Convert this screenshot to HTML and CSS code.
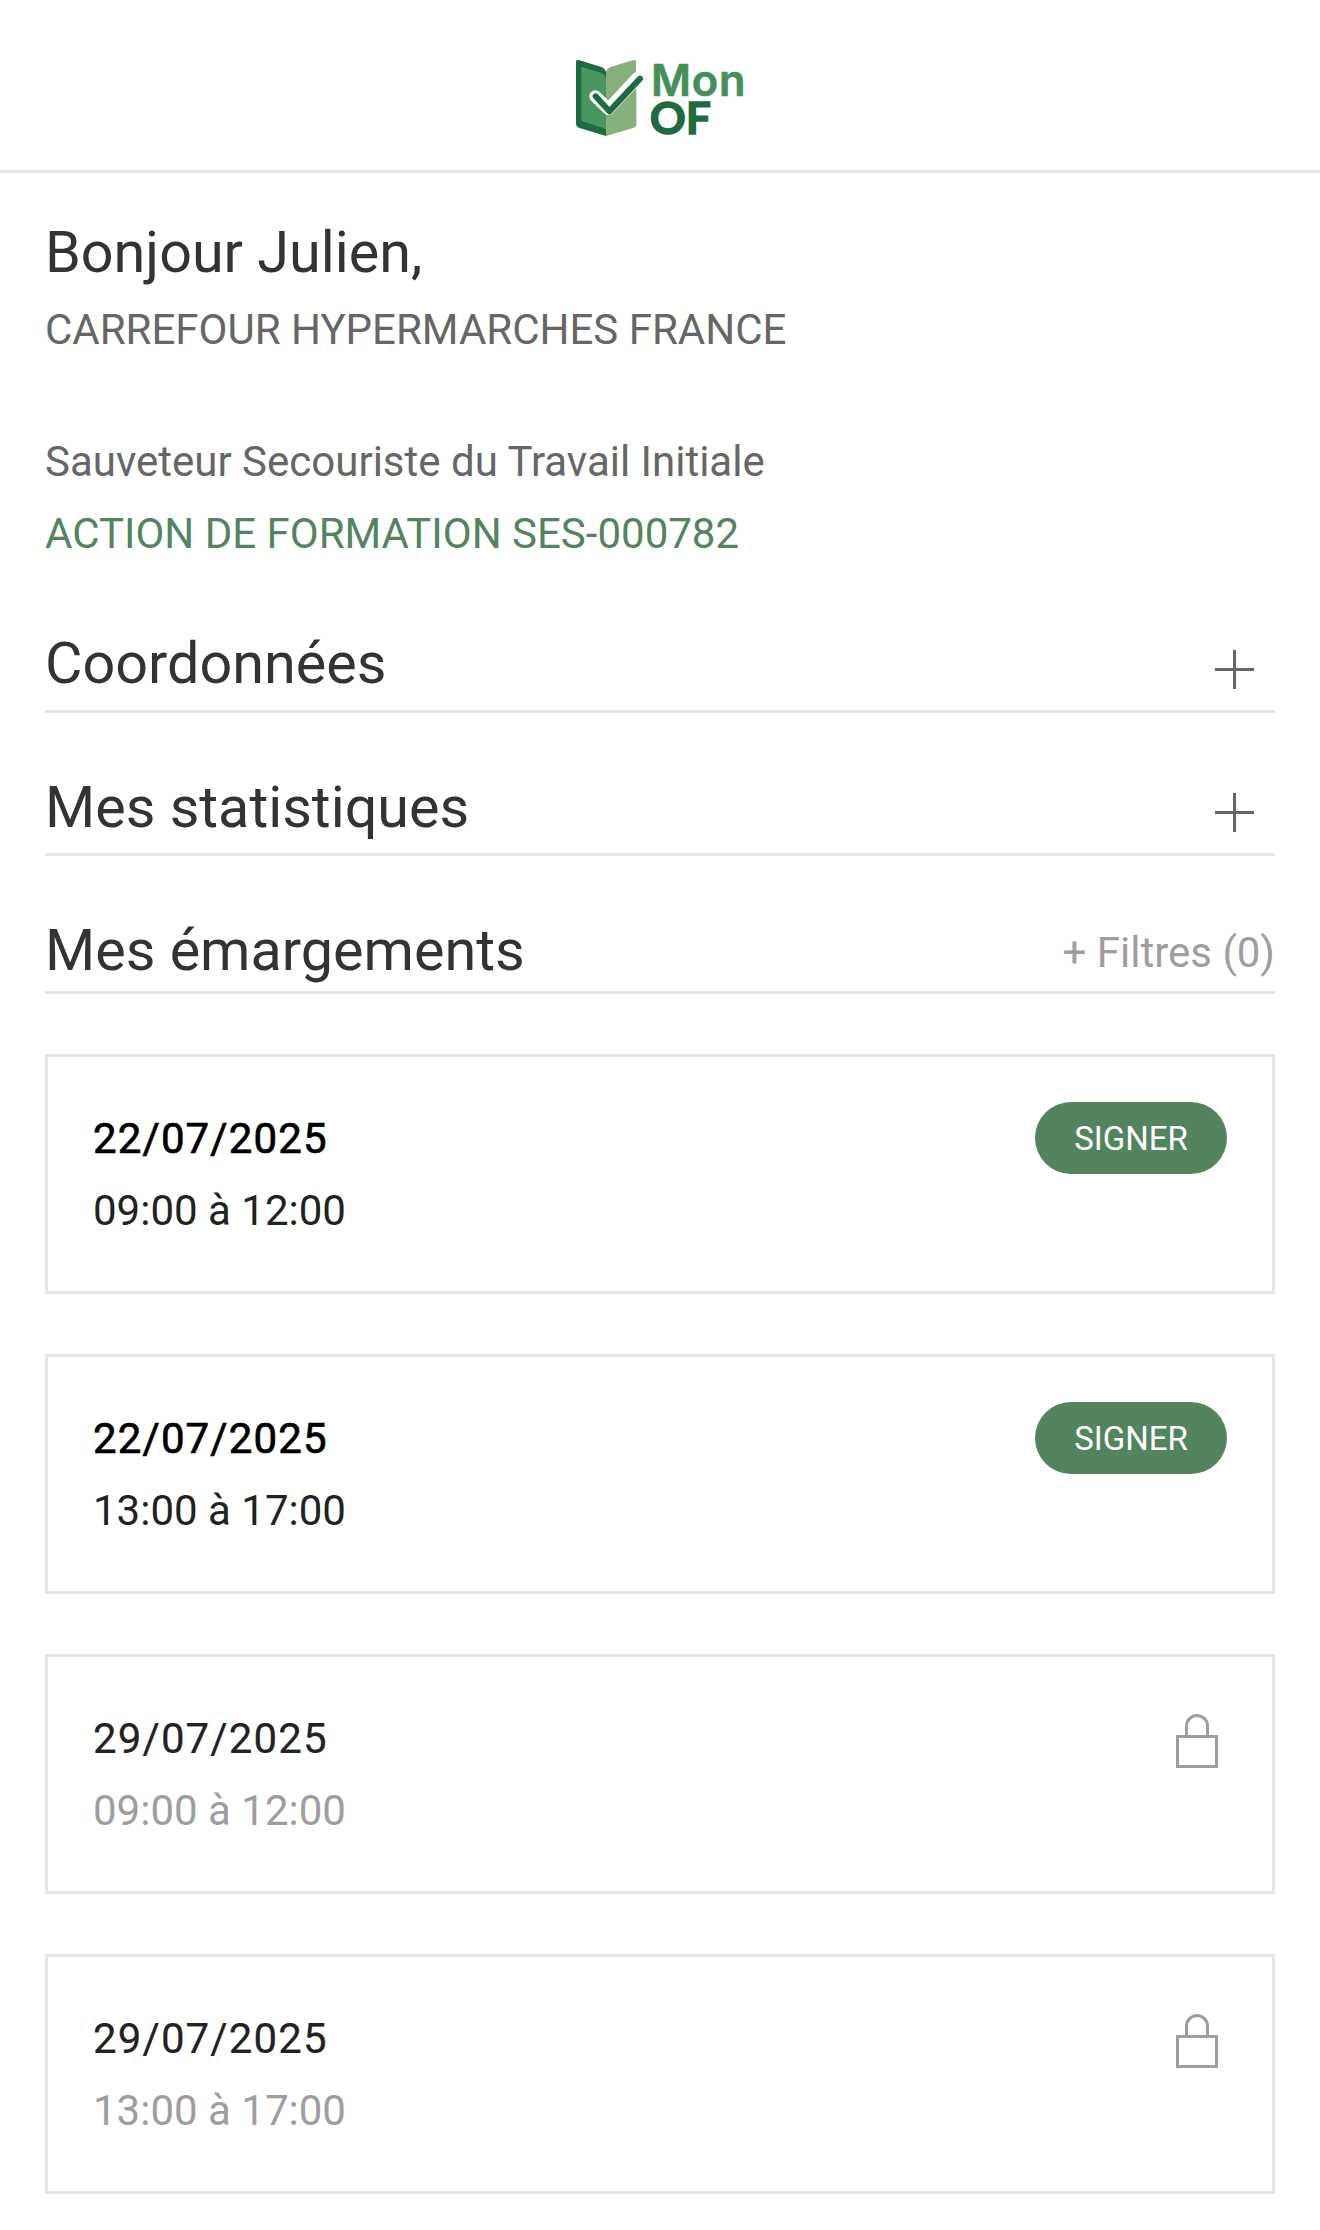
FILE: index.html
```html
<!DOCTYPE html>
<html lang="fr">
<head>
<meta charset="utf-8">
<title>Mon OF</title>
<link rel="stylesheet" href="styles.css">
</head>
<body>
<header class="topbar">
  <svg class="logo" viewBox="30 30 540 270" role="img" aria-label="Mon OF">
    <path fill="#1f6b40" d="M56 60 L124 81 Q135 85 138 96 L138 288 L56 263 Q48 260 48 252 L48 66 Q49 58 56 60Z"/>
    <path fill="#4a965f" d="M64 80 L118 97 Q133 101 138 114 L138 270 Q134 264 120 261 L64 243Z"/>
    <path fill="#86b07c" d="M138 96 Q141 85 152 81 L220 60 Q229 58 229 68 L229 254 Q229 261 222 263 L138 288Z"/>
    <path fill="none" stroke="#fff" stroke-width="36" stroke-linecap="round" stroke-linejoin="round" d="M106 169 L145 207 L231 115"/>
    <path fill="#fff" d="M229 40 H262 V150 H229Z"/>
    <path fill="none" stroke="#1f6b40" stroke-width="18" stroke-linecap="round" stroke-linejoin="round" d="M107 169 L148 214 L240 116"/>
    <text class="logo-mon" x="273" y="167">Mon</text>
    <text class="logo-of" x="269" y="281">OF</text>
  </svg>
</header>
<main class="page">
  <h1 class="title">Bonjour Julien,</h1>
  <p class="line">CARREFOUR HYPERMARCHES FRANCE</p>
  <div class="training">
    <p class="line">Sauveteur Secouriste du Travail Initiale</p>
    <p class="line line-green">ACTION DE FORMATION SES-000782</p>
  </div>
  <section class="section">
    <h2 class="title">Coordonnées</h2>
    <svg class="plus" viewBox="0 0 39 39"><path d="M18 0h3v18h18v3H21v18h-3V21H0v-3h18z"/></svg>
  </section>
  <section class="section">
    <h2 class="title title-low">Mes statistiques</h2>
    <svg class="plus" viewBox="0 0 39 39"><path d="M18 0h3v18h18v3H21v18h-3V21H0v-3h18z"/></svg>
  </section>
  <section class="section section-list">
    <h2 class="title title-low">Mes émargements</h2>
    <a class="filters">+ Filtres (0)</a>
  </section>
  <div class="cards">
    <article class="card">
      <div class="slot"><p class="date">22/07/2025</p><p class="time">09:00 à 12:00</p></div>
      <button class="sign">SIGNER</button>
    </article>
    <article class="card">
      <div class="slot"><p class="date">22/07/2025</p><p class="time">13:00 à 17:00</p></div>
      <button class="sign">SIGNER</button>
    </article>
    <article class="card card-locked">
      <div class="slot"><p class="date">29/07/2025</p><p class="time">09:00 à 12:00</p></div>
      <svg class="lock" viewBox="0 0 60 72"><path d="M10.500 34.500h39v30h-39zM19.500 34V24a10.500 10.500 0 0 1 21 0V34"/></svg>
    </article>
    <article class="card card-locked">
      <div class="slot"><p class="date">29/07/2025</p><p class="time">13:00 à 17:00</p></div>
      <svg class="lock" viewBox="0 0 60 72"><path d="M10.500 34.500h39v30h-39zM19.500 34V24a10.500 10.500 0 0 1 21 0V34"/></svg>
    </article>
  </div>
</main>
</body>
</html>
```
FILE: styles.css
```css
* { box-sizing: border-box; margin: 0; padding: 0; }
body { background: #fff; color: #222; font: 400 42px/72px Roboto, sans-serif; }
.topbar { display: flex; justify-content: center; height: 173px; padding-top: 50px; border-bottom: 3px solid #e5e5e5; }
.logo { width: 180px; height: 90px; overflow: visible; }
.logo-mon { font: 600 130px Inter, sans-serif; letter-spacing: 2.5px; fill: #45905a; stroke: #45905a; stroke-width: 2px; }
.logo-of { font: 700 134px Lato, sans-serif; fill: #1f6b40; stroke: #1f6b40; stroke-width: 4px; }
.page { padding: 38px 45px 0; }
.title { color: #333; font-size: 57.5px; font-weight: 400; line-height: 83px; }
.title-low { padding-top: 1px; }
.line { color: #666; }
.line-green { color: #52855d; }
.training { padding: 60px 0 52px; }
.section { display: flex; justify-content: space-between; height: 91px; margin-bottom: 52px; border-bottom: 3px solid #e5e5e5; }
.section-list { height: 86px; margin-bottom: 60px; }
.plus { width: 39px; height: 39px; margin: 28px 21px 0 0; fill: #666; }
.filters { padding-top: 9px; color: #9e9e9e; }
.cards { display: grid; gap: 60px; }
.card { display: flex; justify-content: space-between; align-items: flex-start; height: 240px; padding: 45px; border: 3px solid #e5e5e5; }
.slot { padding-top: 1px; }
.date { color: #000; letter-spacing: 1.12px; -webkit-text-stroke: 0.7px #000; }
.card-locked .date { color: #222; -webkit-text-stroke: 0.2px #222; }
.card-locked .time { color: #9e9e9e; }
.sign { width: 192px; height: 72px; padding-top: 2px; border: 0; border-radius: 36px; background: #52855d; color: #fff; font: 400 33px/70px Roboto, sans-serif; }
.lock { width: 60px; height: 72px; fill: none; stroke: #9e9e9e; stroke-width: 3; }
```
